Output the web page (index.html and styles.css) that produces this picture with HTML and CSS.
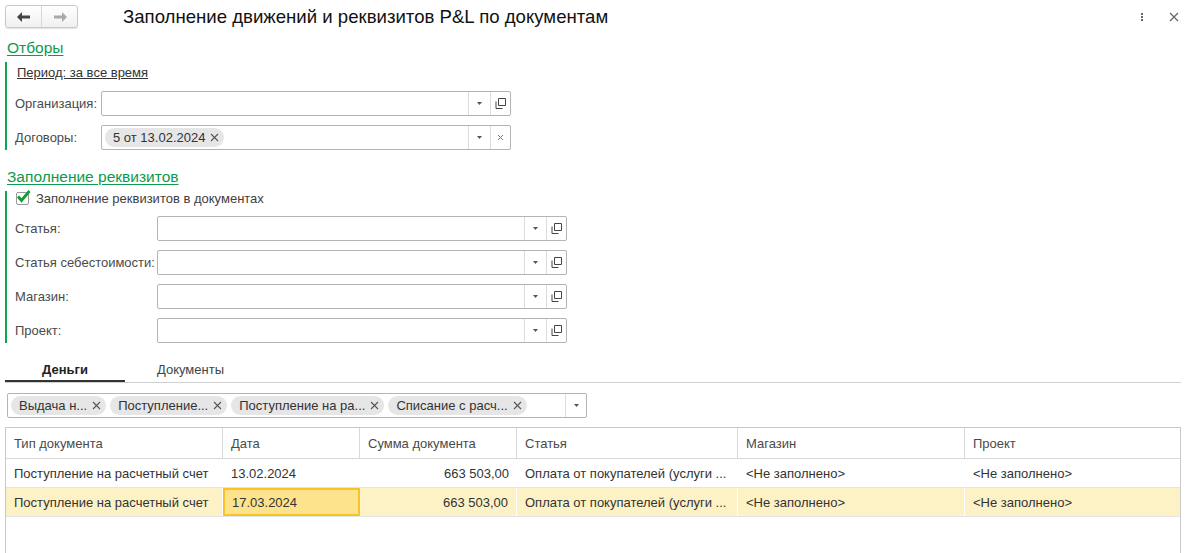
FILE: index.html
```html
<!DOCTYPE html>
<html lang="ru">
<head>
<meta charset="utf-8">
<title>Заполнение движений и реквизитов P&amp;L по документам</title>
<link rel="stylesheet" href="styles.css">
</head>
<body>
<div class="page">
  <div class="header">
    <div class="nav">
      <button class="nav-btn back" aria-label="Назад">
        <svg width="14" height="10" viewBox="0 0 14 10"><path d="M0 5 L5 0 L5 3.5 L13 3.5 L13 6.5 L5 6.5 L5 10 Z" fill="#444"/></svg>
      </button>
      <button class="nav-btn fwd" aria-label="Вперед">
        <svg width="14" height="10" viewBox="0 0 14 10"><path d="M14 5 L9 0 L9 3.5 L1 3.5 L1 6.5 L9 6.5 L9 10 Z" fill="#aaa"/></svg>
      </button>
    </div>
    <h1 class="title">Заполнение движений и реквизитов P&amp;L по документам</h1>
    <div class="header-tools">
      <span class="more"><i></i><i></i><i></i></span>
      <svg class="close" width="10" height="10" viewBox="0 0 10 10"><path d="M1 1 L9 9 M9 1 L1 9" stroke="#666" stroke-width="1.2"/></svg>
    </div>
  </div>

  <div class="section">
    <a class="section-title">Отборы</a>
  </div>
  <div class="group g1">
    <div class="period"><a>Период: за все время</a></div>
    <div class="field-row">
      <label class="lbl">Организация:</label>
      <div class="input">
        <div class="input-body"></div>
        <span class="btn drop"><svg width="5" height="3" viewBox="0 0 5 3"><path d="M0 0 H5 L2.5 3 Z" fill="#555"/></svg></span>
        <span class="btn open"><svg width="11" height="11" viewBox="0 0 11 11"><path d="M3.5 0.5 H10.5 V7.5 H3.5 Z M1 3.5 V10.5 H7.5" fill="none" stroke="#444" stroke-width="1"/></svg></span>
      </div>
    </div>
    <div class="field-row">
      <label class="lbl">Договоры:</label>
      <div class="input">
        <div class="input-body"><span class="tag">5 от 13.02.2024<svg class="x" width="9" height="9" viewBox="0 0 9 9"><path d="M1 1 L8 8 M8 1 L1 8" stroke="#555" stroke-width="1.1"/></svg></span></div>
        <span class="btn drop"><svg width="5" height="3" viewBox="0 0 5 3"><path d="M0 0 H5 L2.5 3 Z" fill="#555"/></svg></span>
        <span class="btn open"><svg width="7" height="7" viewBox="0 0 7 7"><path d="M1 1 L6 6 M6 1 L1 6" stroke="#777" stroke-width="1"/></svg></span>
      </div>
    </div>
  </div>

  <div class="section s2">
    <a class="section-title">Заполнение реквизитов</a>
  </div>
  <div class="group g2">
    <div class="check-row">
      <span class="checkbox"><svg width="15" height="13" viewBox="0 0 15 13"><path d="M2 6.5 L5.5 10.5 L13.5 1" fill="none" stroke="#12a035" stroke-width="2.8"/></svg></span>
      <span class="check-label">Заполнение реквизитов в документах</span>
    </div>
    <div class="field-row">
      <label class="lbl">Статья:</label>
      <div class="input">
        <div class="input-body"></div>
        <span class="btn drop"><svg width="5" height="3" viewBox="0 0 5 3"><path d="M0 0 H5 L2.5 3 Z" fill="#555"/></svg></span>
        <span class="btn open"><svg width="11" height="11" viewBox="0 0 11 11"><path d="M3.5 0.5 H10.5 V7.5 H3.5 Z M1 3.5 V10.5 H7.5" fill="none" stroke="#444" stroke-width="1"/></svg></span>
      </div>
    </div>
    <div class="field-row">
      <label class="lbl">Статья себестоимости:</label>
      <div class="input">
        <div class="input-body"></div>
        <span class="btn drop"><svg width="5" height="3" viewBox="0 0 5 3"><path d="M0 0 H5 L2.5 3 Z" fill="#555"/></svg></span>
        <span class="btn open"><svg width="11" height="11" viewBox="0 0 11 11"><path d="M3.5 0.5 H10.5 V7.5 H3.5 Z M1 3.5 V10.5 H7.5" fill="none" stroke="#444" stroke-width="1"/></svg></span>
      </div>
    </div>
    <div class="field-row">
      <label class="lbl">Магазин:</label>
      <div class="input">
        <div class="input-body"></div>
        <span class="btn drop"><svg width="5" height="3" viewBox="0 0 5 3"><path d="M0 0 H5 L2.5 3 Z" fill="#555"/></svg></span>
        <span class="btn open"><svg width="11" height="11" viewBox="0 0 11 11"><path d="M3.5 0.5 H10.5 V7.5 H3.5 Z M1 3.5 V10.5 H7.5" fill="none" stroke="#444" stroke-width="1"/></svg></span>
      </div>
    </div>
    <div class="field-row">
      <label class="lbl">Проект:</label>
      <div class="input">
        <div class="input-body"></div>
        <span class="btn drop"><svg width="5" height="3" viewBox="0 0 5 3"><path d="M0 0 H5 L2.5 3 Z" fill="#555"/></svg></span>
        <span class="btn open"><svg width="11" height="11" viewBox="0 0 11 11"><path d="M3.5 0.5 H10.5 V7.5 H3.5 Z M1 3.5 V10.5 H7.5" fill="none" stroke="#444" stroke-width="1"/></svg></span>
      </div>
    </div>
  </div>

  <div class="tabs">
    <div class="tab active">Деньги</div>
    <div class="tab">Документы</div>
  </div>

  <div class="filter">
    <div class="filter-body">
      <span class="tag">Выдача н...<svg class="x" width="9" height="9" viewBox="0 0 9 9"><path d="M1 1 L8 8 M8 1 L1 8" stroke="#555" stroke-width="1.1"/></svg></span>
      <span class="tag">Поступление...<svg class="x" width="9" height="9" viewBox="0 0 9 9"><path d="M1 1 L8 8 M8 1 L1 8" stroke="#555" stroke-width="1.1"/></svg></span>
      <span class="tag">Поступление на ра...<svg class="x" width="9" height="9" viewBox="0 0 9 9"><path d="M1 1 L8 8 M8 1 L1 8" stroke="#555" stroke-width="1.1"/></svg></span>
      <span class="tag">Списание с расч...<svg class="x" width="9" height="9" viewBox="0 0 9 9"><path d="M1 1 L8 8 M8 1 L1 8" stroke="#555" stroke-width="1.1"/></svg></span>
    </div>
    <span class="btn drop"><svg width="5" height="3" viewBox="0 0 5 3"><path d="M0 0 H5 L2.5 3 Z" fill="#555"/></svg></span>
  </div>

  <div class="table">
    <div class="tr th">
      <div class="c c1">Тип документа</div>
      <div class="c c2">Дата</div>
      <div class="c c3">Сумма документа</div>
      <div class="c c4">Статья</div>
      <div class="c c5">Магазин</div>
      <div class="c c6">Проект</div>
    </div>
    <div class="tr">
      <div class="c c1">Поступление на расчетный счет</div>
      <div class="c c2">13.02.2024</div>
      <div class="c c3 num">663 503,00</div>
      <div class="c c4">Оплата от покупателей (услуги ...</div>
      <div class="c c5">&lt;Не заполнено&gt;</div>
      <div class="c c6">&lt;Не заполнено&gt;</div>
    </div>
    <div class="tr sel">
      <div class="c c1">Поступление на расчетный счет</div>
      <div class="c c2 cur">17.03.2024</div>
      <div class="c c3 num">663 503,00</div>
      <div class="c c4">Оплата от покупателей (услуги ...</div>
      <div class="c c5">&lt;Не заполнено&gt;</div>
      <div class="c c6">&lt;Не заполнено&gt;</div>
    </div>
  </div>
</div>
</body>
</html>
```

FILE: styles.css
```css
* { box-sizing: border-box; }
html, body { margin: 0; padding: 0; background: #fff; }
body {
  font-family: "Liberation Sans", Arial, sans-serif;
  font-size: 13px;
  color: #404040;
  width: 1187px;
  height: 553px;
  overflow: hidden;
}

.header {
  display: flex;
  align-items: flex-start;
  height: 34px;
  padding: 5px 0 0 5px;
}
.nav {
  display: flex;
  width: 73px;
  height: 23px;
  border: 1px solid #c8c8c8;
  border-radius: 3px;
  background: linear-gradient(#ffffff, #f0f0f0);
  box-shadow: 0 1px 1px rgba(0,0,0,0.12);
}
.nav-btn {
  flex: 1;
  border: 0;
  background: transparent;
  padding: 0;
  display: flex;
  align-items: center;
  justify-content: center;
}
.nav-btn.back { border-right: 1px solid #d8d8d8; }
.title {
  margin: 0 0 0 45px;
  font-size: 18.6px;
  font-weight: normal;
  color: #111;
  line-height: 24px;
}
.header-tools {
  margin-left: auto;
  display: flex;
  align-items: center;
  gap: 26px;
  padding: 7px 8px 0 0;
}
.more {
  display: flex;
  flex-direction: column;
  gap: 1px;
}
.more i {
  display: block;
  width: 2px;
  height: 2px;
  background: #666;
}
.close { display: block; }

.section { padding-left: 7px; margin-top: 4px; height: 24px; }
.section.s2 { margin-top: 17px; }
.section-title {
  font-size: 15.5px;
  color: #0c9a4e;
  text-decoration: underline;
  text-underline-offset: 2px;
  line-height: 20px;
}

.group {
  margin-left: 5px;
  border-left: 2px solid #13a24e;
  padding-left: 8px;
}
.g1 .lbl { width: 86px; }
.g2 .lbl { width: 142px; }
.period {
  height: 21px;
  padding: 2px 0 0 2px;
  font-size: 13px;
  line-height: 18px;
}
.period a { color: #333; text-decoration: underline; }

.field-row {
  display: flex;
  align-items: center;
  height: 25px;
  margin-top: 9px;
}
.g1 .period + .field-row { margin-top: 8px; }
.lbl {
  flex: none;
  color: #4a4a4a;
  white-space: nowrap;
}
.input {
  display: flex;
  width: 410px;
  height: 25px;
  border: 1px solid #b4b4b4;
  border-radius: 2px;
  background: #fff;
}
.input-body {
  flex: 1;
  display: flex;
  align-items: center;
  padding-left: 3px;
}
.btn {
  flex: none;
  display: flex;
  align-items: center;
  justify-content: center;
  border-left: 1px solid #dcdcdc;
}
.btn.drop { width: 22px; }
.btn.open { width: 20px; }

.tag {
  display: inline-flex;
  align-items: center;
  height: 19px;
  padding: 0 5px 0 8px;
  background: #e6e6e6;
  border-radius: 10px;
  color: #333;
  white-space: nowrap;
  gap: 5px;
}
.tag .x { display: block; }

.check-row {
  display: flex;
  align-items: center;
  height: 14px;
  padding-left: 1px;
}
.checkbox {
  flex: none;
  width: 13px;
  height: 13px;
  border: 1px solid #9a9a9a;
  border-radius: 2px;
  position: relative;
  margin-right: 7px;
}
.checkbox svg { position: absolute; left: -1px; top: -3px; }
.check-label { color: #404040; }
.g2 .check-row + .field-row { margin-top: 11px; }

.tabs {
  display: flex;
  margin: 17px 6px 0 5px;
  border-bottom: 1px solid #d0d0d0;
  height: 23px;
}
.tab {
  width: 120px;
  text-align: center;
  line-height: 20px;
  color: #444;
}
.tab + .tab { width: 130px; margin-left: 12px; text-align: left; padding-left: 20px; }
.tab.active {
  font-weight: bold;
  color: #222;
  border-bottom: 2px solid #333;
}

.filter {
  display: flex;
  width: 580px;
  height: 25px;
  margin: 10px 0 0 7px;
  border: 1px solid #b4b4b4;
  border-radius: 2px;
}
.filter-body {
  flex: 1;
  display: flex;
  align-items: center;
  gap: 4px;
  padding-left: 3px;
}
.filter .btn.drop { width: 21px; }

.table {
  margin: 9px 6px 0 5px;
  border: 1px solid #c8c8c8;
  height: 140px;
}
.tr {
  display: flex;
  height: 29px;
  border-bottom: 1px solid #e4e4e4;
}
.tr.th { height: 31px; border-bottom: 1px solid #d8d8d8; }
.c {
  padding: 0 8px;
  display: flex;
  align-items: center;
  white-space: nowrap;
  overflow: hidden;
  color: #333;
}
.th .c { border-right: 1px solid #d8d8d8; color: #4a4a4a; }
.th .c6 { border-right: 0; }
.c1 { width: 217px; }
.c2 { width: 137px; }
.c3 { width: 157px; }
.c4 { width: 221px; }
.c5 { width: 227px; }
.c6 { flex: 1; }
.num { justify-content: flex-end; }
.tr.sel { background: #fdf2c6; }
.tr.sel .c { border-right: 1px solid #fff; }
.tr.sel .c6 { border-right: 0; }
.tr.sel .c.cur {
  background: #fde38c;
  border: 2px solid #f6c42a;
  padding-left: 7px;
}
```
